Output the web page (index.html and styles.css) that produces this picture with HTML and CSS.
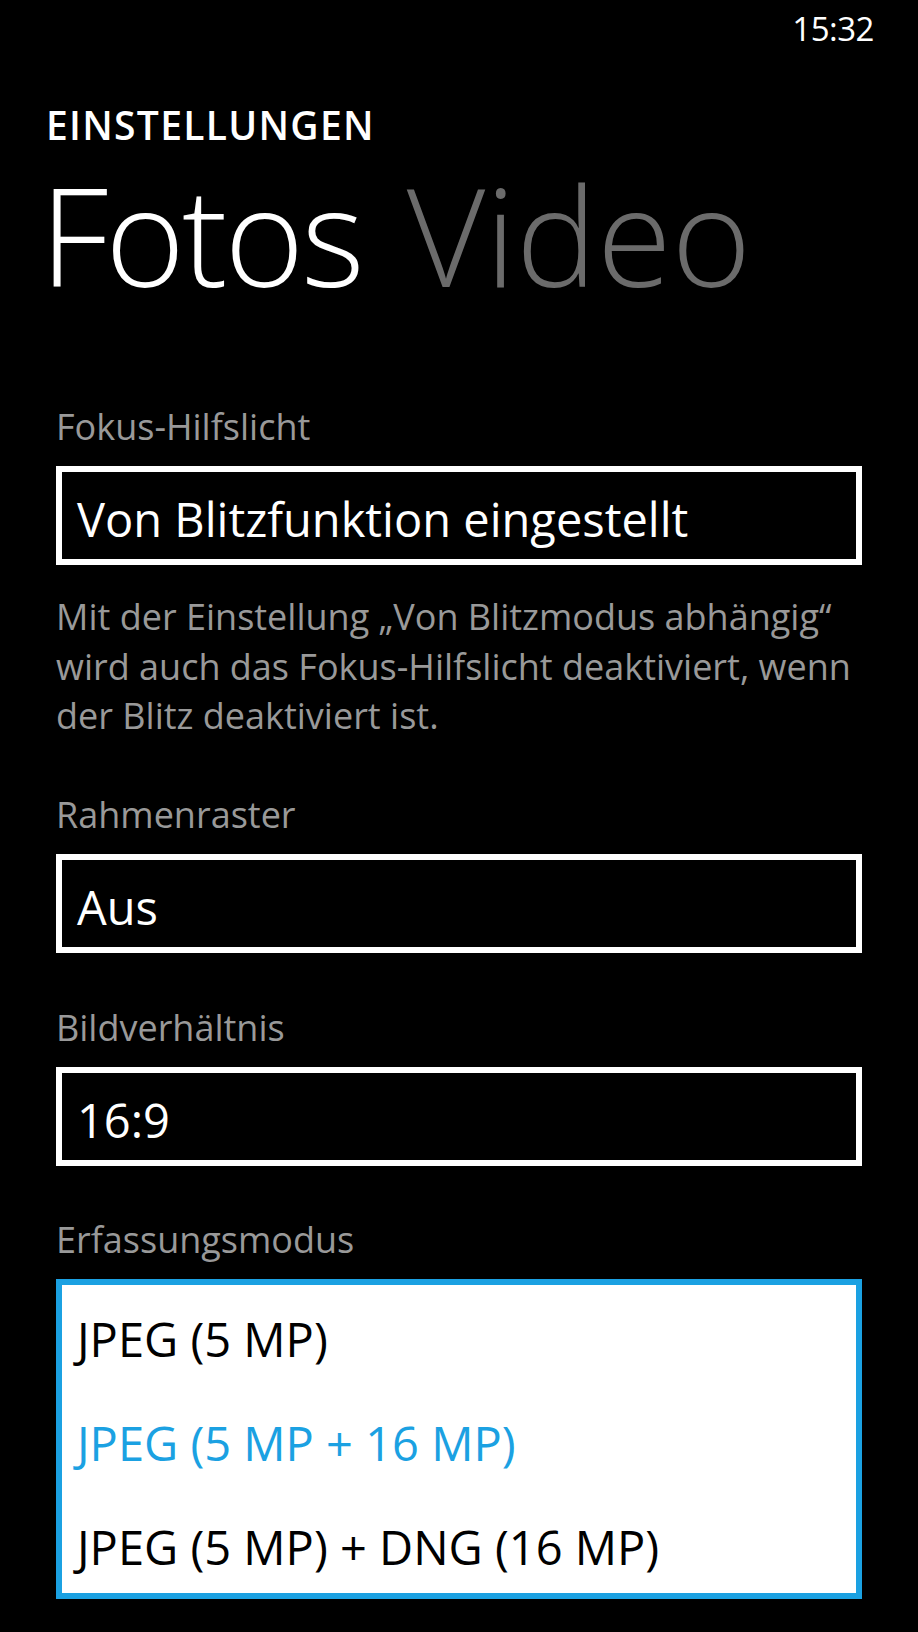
FILE: index.html
```html
<!DOCTYPE html>
<html lang="de">
<head>
  <meta charset="UTF-8" />
  <meta name="viewport" content="width=device-width, initial-scale=1.0" />
  <title>Einstellungen</title>
  <link rel="stylesheet" href="styles.css">
</head>
<body>

  <div class="status">
    <span class="clock">15:32</span>
  </div>

  <div class="pivot">
    <div class="pivot-title">EINSTELLUNGEN</div>
    <div class="pivot-headers">
      <span class="pivot-item active">Fotos</span>
      <span class="pivot-item">Video</span>
    </div>
  </div>

  <div class="settings">
    <div class="setting">
      <div class="label">Fokus-Hilfslicht</div>
      <div class="picker">Von Blitzfunktion eingestellt</div>
      <p class="hint">Mit der Einstellung „Von Blitzmodus abhängig“<br>wird auch das Fokus-Hilfslicht deaktiviert, wenn<br>der Blitz deaktiviert ist.</p>
    </div>

    <div class="setting">
      <div class="label">Rahmenraster</div>
      <div class="picker">Aus</div>
    </div>

    <div class="setting">
      <div class="label">Bildverhältnis</div>
      <div class="picker">16:9</div>
    </div>

    <div class="setting">
      <div class="label">Erfassungsmodus</div>
      <ul class="picker-list">
        <li>JPEG (5 MP)</li>
        <li class="selected">JPEG (5 MP + 16 MP)</li>
        <li>JPEG (5 MP) + DNG (16 MP)</li>
      </ul>
    </div>
  </div>

</body>
</html>
```

FILE: styles.css
```css
body {
  margin: 0;
  background-color: #000;
  color: #fff;
  font-family: "Open Sans", "Noto Sans", sans-serif;
}
.status {
  display: flex;
  justify-content: flex-end;
  padding: 12px 44px 0 0;
}
.clock {
  font-size: 33px;
  line-height: 34px;
  letter-spacing: -0.5px;
}
.pivot {
  padding-left: 46px;
}
.pivot-title {
  margin-top: 59px;
  font-size: 39px;
  line-height: 39px;
  font-weight: 600;
  letter-spacing: 1.3px;
}
.pivot-headers {
  display: flex;
  gap: 45px;
  margin-top: 23px;
  margin-left: -6px;
}
.pivot-item {
  font-size: 136px;
  line-height: 136px;
  font-weight: 300;
  color: #6b6b6b;
}
.pivot-item.active {
  color: #fff;
  letter-spacing: -3px;
}
.settings {
  padding: 0 56px;
  margin-top: 102px;
}
.setting + .setting {
  margin-top: 52.5px;
}
.label {
  font-size: 36px;
  line-height: 44px;
  color: #999;
  margin-bottom: 17px;
}
.picker {
  border: 6px solid #fff;
  height: 79px;
  padding: 8px 0 0 15px;
  font-size: 47px;
  line-height: 79px;
}
.hint {
  margin: 27px 0 0;
  font-size: 36px;
  line-height: 49.5px;
  white-space: nowrap;
  color: #999;
}
.picker-list {
  list-style: none;
  margin: 0;
  padding: 2px 0 0 15px;
  height: 306px;
  overflow: hidden;
  border: 6px solid #1ba1e2;
  background-color: #fff;
  color: #000;
}
.picker-list li {
  font-size: 47px;
  line-height: 104px;
}
.picker-list .selected {
  color: #1ba1e2;
}
```
